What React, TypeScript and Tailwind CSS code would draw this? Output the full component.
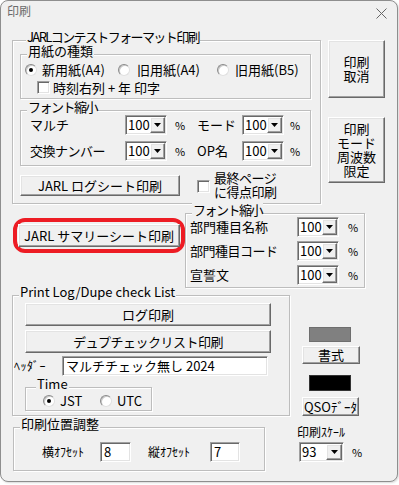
import React from "react";

const raised =
  "border border-t-white border-l-white border-r-[#696969] border-b-[#696969] shadow-[inset_-1px_-1px_0_#a0a0a0,inset_1px_1px_0_#e3e3e3]";
const sunken =
  "border border-t-[#a0a0a0] border-l-[#a0a0a0] border-r-white border-b-white shadow-[inset_1px_1px_0_#696969,inset_-1px_-1px_0_#e3e3e3]";

// group box: the caption sits on the top line, pulled up with a negative margin
function Group({
  title,
  className = "",
  bodyClass = "",
  legendClass = "ml-[6px]",
  children,
}: {
  title: string;
  className?: string;
  bodyClass?: string;
  legendClass?: string;
  children?: React.ReactNode;
}) {
  return (
    <div className={`flex shrink-0 flex-col pt-[7px] ${className}`}>
      <div
        className={`flex flex-1 flex-col border border-[#bdbdbd] shadow-[inset_1px_1px_0_#fff,1px_1px_0_#fff] ${bodyClass}`}
      >
        <div
          className={`-mt-[11px] mb-[3px] self-start bg-[#f0f0f0] px-[1px] text-[13px] leading-[14px] ${legendClass}`}
        >
          {title}
        </div>
        {children}
      </div>
    </div>
  );
}

function Button({
  className = "",
  children,
}: {
  className?: string;
  children: React.ReactNode;
}) {
  return (
    <div
      className={`flex shrink-0 items-center justify-center bg-[#f0f0f0] text-center text-[13px] leading-[14px] ${raised} ${className}`}
    >
      {children}
    </div>
  );
}

function Combo({ value, className = "w-[42px]" }: { value: string; className?: string }) {
  return (
    <div className={`flex h-[20px] shrink-0 items-stretch bg-white p-[1px] ${sunken} ${className}`}>
      <span className="flex-1 pl-[1px] text-[13px] leading-[16px]">{value}</span>
      <span className={`flex w-[16px] items-center justify-center bg-[#f0f0f0] ${raised}`}>
        <svg width="7" height="4" viewBox="0 0 7 4">
          <path d="M0 0h7L3.5 4z" fill="#000" />
        </svg>
      </span>
    </div>
  );
}

function Radio({ checked }: { checked?: boolean }) {
  return (
    <span className="flex h-[12px] w-[12px] shrink-0 items-center justify-center rounded-full border border-t-[#8a8a8a] border-l-[#8a8a8a] border-r-[#e0e0e0] border-b-[#e0e0e0] bg-white shadow-[inset_1px_1px_0_#c8c8c8]">
      {checked && <span className="h-[4px] w-[4px] rounded-full bg-black" />}
    </span>
  );
}

function Check() {
  return <span className={`block h-[13px] w-[13px] shrink-0 bg-white ${sunken}`} />;
}

function Field({ value, className }: { value: string; className: string }) {
  return (
    <div className={`h-[20px] shrink-0 bg-white pl-[3px] text-[13px] leading-[17px] ${sunken} ${className}`}>
      {value}
    </div>
  );
}

export default function App() {
  return (
    <div className="h-[485px] w-[399px] bg-white font-['Noto_Sans_CJK_JP',sans-serif] text-[13px] text-black">
      <div className="flex h-[482px] w-[398px] flex-col overflow-hidden rounded-[8px] border border-[#8e8e8e] bg-[#f0f0f0] shadow-[1px_1px_2px_rgba(0,0,0,0.15)]">
        {/* title bar */}
        <div className="flex h-[30px] shrink-0 items-start justify-between pl-[6px] pr-[10px] pt-[3px]">
          <span className="text-[12px] leading-[14px] text-[#6b6b6b]">印刷</span>
          <svg width="11" height="11" viewBox="0 0 11 11" className="mt-[4px]">
            <path d="M0.5 0.5l10 10M10.5 0.5l-10 10" stroke="#666" strokeWidth="1" />
          </svg>
        </div>

        <div className="flex flex-col pl-[11px]">
          {/* row 1 */}
          <div className="mt-[2px] flex items-start">
            <Group
              title="JARLコンテストフォーマット印刷"
              className="h-[171px] w-[309px]"
              bodyClass="pl-[7px]"
              legendClass="ml-[6px] tracking-[-1.6px]"
            >
              <Group title="用紙の種類" className="h-[52px] w-[291px]">
                <div className="flex h-[17px] items-center pl-[4px]">
                  <div className="flex w-[93px] items-center gap-[5px]">
                    <Radio checked />
                    <span className="leading-[14px]">新用紙(A4)</span>
                  </div>
                  <div className="flex w-[99px] items-center gap-[7px]">
                    <Radio />
                    <span className="leading-[14px]">旧用紙(A4)</span>
                  </div>
                  <div className="flex items-center gap-[6px]">
                    <Radio />
                    <span className="leading-[14px]">旧用紙(B5)</span>
                  </div>
                </div>
                <div className="mt-[1px] flex h-[17px] items-center gap-[3px] pl-[16px]">
                  <Check />
                  <span className="leading-[14px]">時刻右列 + 年 印字</span>
                </div>
              </Group>

              <Group
                title="フォント縮小"
                className="mt-[4px] h-[63px] w-[291px]"
                legendClass="ml-[6px] tracking-[-1.5px]"
              >
                <div className="-mt-[2px] flex flex-col gap-[6px] pl-[9px]">
                  <div className="flex h-[20px] items-center">
                    <span className="w-[95px]">マルチ</span>
                    <Combo value="100" />
                    <span className="w-[30px] pl-[8px] text-[11px]">%</span>
                    <span className="w-[45px]">モード</span>
                    <Combo value="100" />
                    <span className="pl-[6px] text-[11px]">%</span>
                  </div>
                  <div className="flex h-[20px] items-center">
                    <span className="w-[95px] tracking-[-0.5px]">交換ナンバー</span>
                    <Combo value="100" />
                    <span className="w-[30px] pl-[8px] text-[11px]">%</span>
                    <span className="w-[45px]">OP名</span>
                    <Combo value="100" />
                    <span className="pl-[6px] text-[11px]">%</span>
                  </div>
                </div>
              </Group>

              <div className="mt-[9px] flex items-start">
                <Button className="h-[21px] w-[160px]">JARL ログシート印刷</Button>
                <div className="ml-[17px] mt-[5px]">
                  <Check />
                </div>
                <div className="-mt-[4px] ml-[4px] leading-[14px] tracking-[-0.5px]">
                  最終ページ
                  <br />
                  に得点印刷
                </div>
              </div>
            </Group>

            <div className="ml-[7px] flex w-[57px] flex-col">
              <Button className="mt-[7px] h-[58px] w-[57px]">
                印刷
                <br />
                取消
              </Button>
              <Button className="mt-[19px] h-[66px] w-[57px]">
                印刷
                <br />
                モード
                <br />
                周波数
                <br />
                限定
              </Button>
            </div>
          </div>

          {/* row 2 */}
          <div className="flex items-start">
            <div className="ml-[1px] mt-[14px] flex h-[35px] w-[172px] items-center justify-center rounded-[12px] border-[4px] border-[#ed1c24]">
              <Button className="h-[23px] w-[162px]">JARL サマリーシート印刷</Button>
            </div>
            <Group
              title="フォント縮小"
              className="mt-[2px] h-[82px] w-[180px]"
              legendClass="ml-[6px] tracking-[-1.5px]"
            >
              <div className="-mt-[3px] flex flex-col gap-[4px] pl-[4px]">
                <div className="flex h-[20px] items-center">
                  <span className="w-[107px]">部門種目名称</span>
                  <Combo value="100" />
                  <span className="pl-[9px] text-[11px]">%</span>
                </div>
                <div className="flex h-[20px] items-center">
                  <span className="w-[107px] tracking-[-0.5px]">部門種目コード</span>
                  <Combo value="100" />
                  <span className="pl-[9px] text-[11px]">%</span>
                </div>
                <div className="flex h-[20px] items-center">
                  <span className="w-[107px]">宣誓文</span>
                  <Combo value="100" />
                  <span className="pl-[9px] text-[11px]">%</span>
                </div>
              </div>
            </Group>
          </div>

          {/* row 3 */}
          <div className="flex items-start">
            <Group title="Print Log/Dupe check List" className="h-[128px] w-[278px]">
              <Button className="ml-[12px] mt-[1px] h-[23px] w-[246px]">ログ印刷</Button>
              <Button className="ml-[12px] mt-[4px] h-[23px] w-[246px] tracking-[-0.5px]">
                デュプチェックリスト印刷
              </Button>
              <div className="mt-[3px] flex h-[20px] items-center">
                <span className="ml-[1px] w-[48px] text-[12px] tracking-[0.5px]">ﾍｯﾀﾞｰ</span>
                <Field value="マルチチェック無し 2024" className="w-[206px]" />
              </div>
              <Group title="Time" className="ml-[12px] mt-[4px] h-[31px] w-[127px]" legendClass="ml-[10px]">
                <div className="flex h-[14px] items-center pl-[17px]">
                  <div className="flex w-[57px] items-center gap-[5px]">
                    <Radio checked />
                    <span className="leading-[14px]">JST</span>
                  </div>
                  <div className="flex items-center gap-[5px]">
                    <Radio />
                    <span className="leading-[14px]">UTC</span>
                  </div>
                </div>
              </Group>
            </Group>

            <div className="ml-[12px] flex w-[58px] flex-col">
              <div className="ml-[7px] mt-[39px] h-[15px] w-[42px] border border-[#6e6e6e] bg-[#808080]" />
              <Button className="mt-[4px] h-[18px] w-[58px]">書式</Button>
              <div className="ml-[7px] mt-[11px] h-[16px] w-[42px] border border-[#333] bg-black" />
              <Button className="mt-[6px] h-[19px] w-[57px] text-[12px]">QSOﾃﾞｰﾀ</Button>
            </div>
          </div>

          {/* row 4 */}
          <div className="flex items-start">
            <Group title="印刷位置調整" className="ml-[1px] mt-[4px] h-[51px] w-[252px]">
              <div className="mt-[8px] flex h-[20px] items-center pl-[28px]">
                <span className="w-[58px] text-[12px]">横ｵﾌｾｯﾄ</span>
                <Field value="8" className="w-[31px]" />
                <span className="ml-[17px] w-[62px] text-[12px]">縦ｵﾌｾｯﾄ</span>
                <Field value="7" className="w-[30px]" />
              </div>
            </Group>
            <div className="ml-[32px] mt-[9px] flex flex-col">
              <span className="h-[17px] text-[12px] leading-[14px]">印刷ｽｹｰﾙ</span>
              <div className="ml-[2px] flex items-center">
                <Combo value="93" className="w-[45px]" />
                <span className="pl-[8px] text-[11px]">%</span>
              </div>
            </div>
          </div>
        </div>
      </div>
    </div>
  );
}
